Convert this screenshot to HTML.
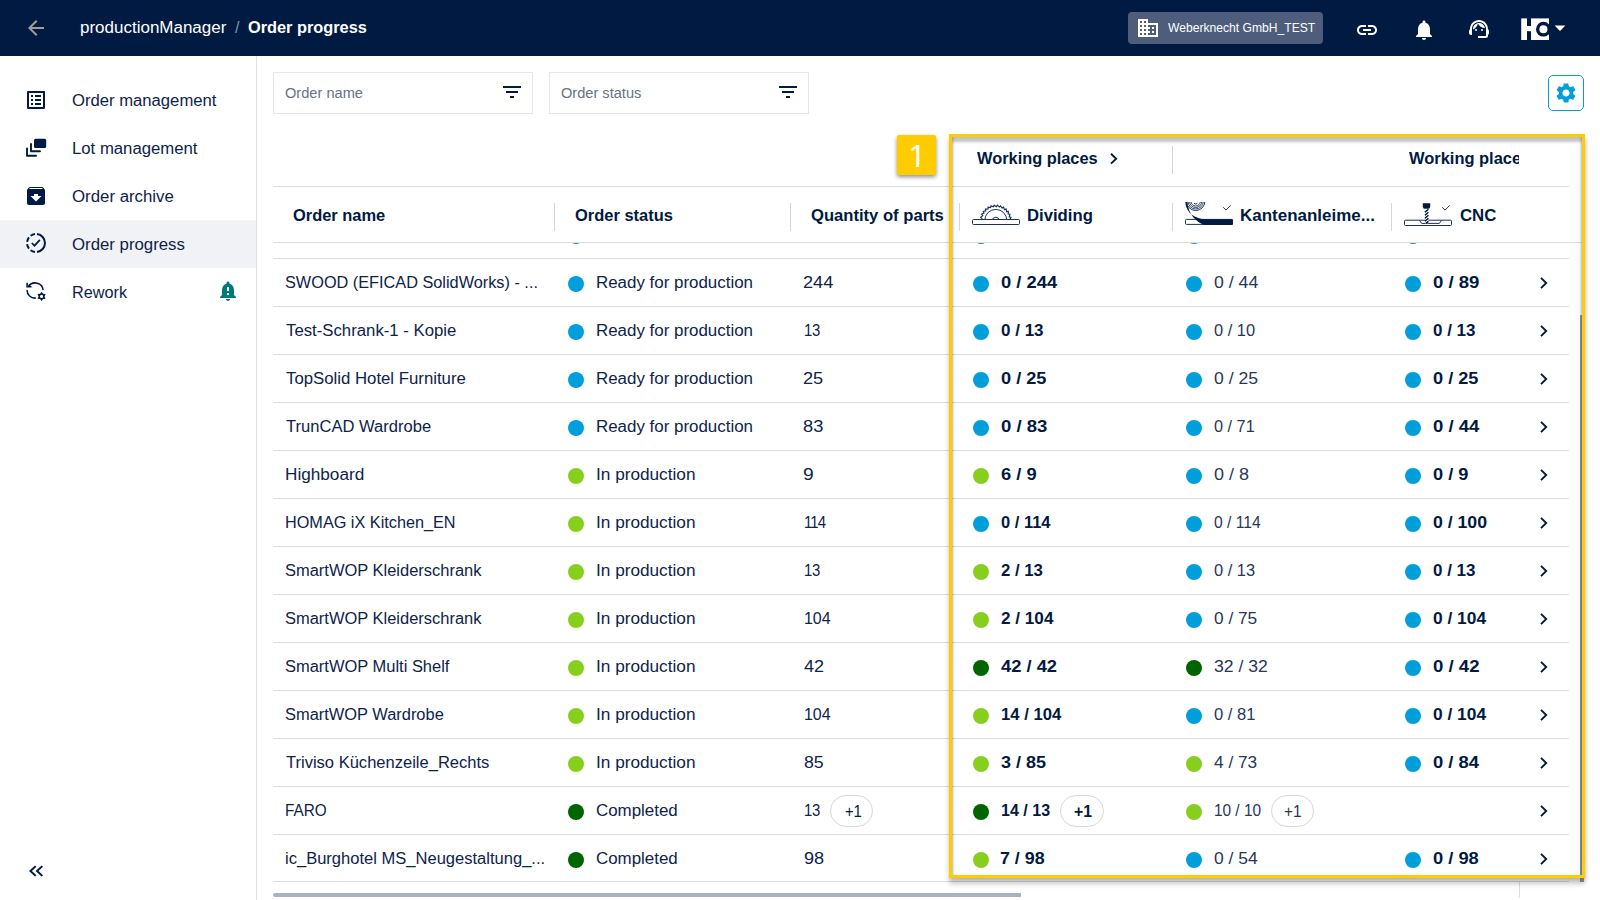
<!DOCTYPE html>
<html lang="en">
<head>
<meta charset="utf-8">
<title>productionManager - Order progress</title>
<style>
*{box-sizing:border-box;margin:0;padding:0}
html,body{width:1600px;height:900px;overflow:hidden;background:#fff}
body{font-family:"Liberation Sans",sans-serif;color:#001a41;position:relative;font-size:16px}
.abs{position:absolute}
.t{position:absolute;white-space:nowrap;line-height:20px;font-size:16px;color:#001a41;transform-origin:0 0}
.b{font-weight:700}
#top{position:absolute;left:0;top:0;width:1600px;height:56px;background:#001a41}
#org{position:absolute;left:1128px;top:12px;width:195px;height:32px;border-radius:4px;background:#4d5d7b}
#side{position:absolute;left:0;top:56px;width:257px;height:844px;border-right:1px solid #dddfe4;background:#fff}
#sel{position:absolute;left:0;top:220px;width:256px;height:48px;background:#f1f2f5}
.filt{position:absolute;top:72px;width:260px;height:42px;border:1px solid #e4e6ec;background:#fff}
#gear{position:absolute;left:1548px;top:75px;width:36px;height:36px;border:1px solid #009fdc;border-radius:5px;background:#fff}
.hl{position:absolute;height:1px;background:#dcdde1}
.vl{position:absolute;width:1px;background:#d4d6db}
.dot{position:absolute;width:16px;height:16px;border-radius:50%}
.blue{background:#009fdc}.lg{background:#86cf1e}.dg{background:#006400}
.chip{position:absolute;height:32px;border:1px solid #d7d8dc;border-radius:16px;background:#fff}
#ybox{position:absolute;left:949px;top:134px;width:636px;height:744px;border:3px solid #ffcc00;box-shadow:0 6px 5px rgba(0,0,0,.2),1px 2px 4px rgba(0,0,0,.12),inset 0 5px 3px rgba(0,0,0,.23),inset 3px 0 3px -2px rgba(0,0,0,.22),inset -3px 0 3px -2px rgba(0,0,0,.22)}
#badge{position:absolute;left:897px;top:135px;width:39px;height:40px;background:#ffcc00;border-radius:2px;box-shadow:0 2px 4px rgba(0,0,0,.45)}
</style>
</head>
<body>
<div id="top"></div>
<svg class="abs" style="left:24px;top:16px" width="24" height="24" viewBox="0 0 24 24"><path fill="#9e9e99" d="M20 11H7.83l5.59-5.59L12 4l-8 8 8 8 1.41-1.41L7.83 13H20v-2z"/></svg>
<div id="org"></div>
<svg class="abs" style="left:1136px;top:15.5px" width="24" height="24" viewBox="0 0 24 24"><path fill="#fff" d="M12 7V3H2v18h20V7H12zM6 19H4v-2h2v2zm0-4H4v-2h2v2zm0-4H4V9h2v2zm0-4H4V5h2v2zm4 12H8v-2h2v2zm0-4H8v-2h2v2zm0-4H8V9h2v2zm0-4H8V5h2v2zm10 12h-8v-2h2v-2h-2v-2h2v-2h-2V9h8v10zm-2-8h-2v2h2v-2zm0 4h-2v2h2v-2z"/></svg>
<svg class="abs" style="left:1355px;top:17.5px" width="24" height="24" viewBox="0 0 24 24"><path fill="#fff" d="M3.9 12c0-1.71 1.39-3.1 3.1-3.1h4V7H7c-2.76 0-5 2.24-5 5s2.24 5 5 5h4v-1.900H7c-1.71 0-3.1-1.390-3.1-3.100zM8 13h8v-2H8v2zm9-6h-4v1.900h4c1.710 0 3.100 1.390 3.100 3.100s-1.390 3.100-3.100 3.100h-4V17h4c2.760 0 5-2.240 5-5s-2.240-5-5-5z"/></svg>
<svg class="abs" style="left:1411.5px;top:17.5px" width="24" height="24" viewBox="0 0 24 24"><path fill="#fff" d="M12 22c1.100 0 2-.900 2-2h-4c0 1.100.890 2 2 2zm6-6v-5c0-3.070-1.640-5.640-4.500-6.320V4c0-.830-.670-1.500-1.500-1.500s-1.500.670-1.500 1.500v.680C7.630 5.360 6 7.920 6 11v5l-2 2v1h16v-1l-2-2z"/></svg>
<svg class="abs" style="left:1467.3px;top:17px" width="24" height="24" viewBox="0 0 24 24"><path fill="#fff" d="M21 12.220C21 6.730 16.740 3 12 3c-4.690 0-9 3.650-9 9.280-.600.340-1 .980-1 1.720v2c0 1.100.900 2 2 2h1v-6.100c0-3.870 3.130-7 7-7s7 3.130 7 7V19h-8v2h8c1.100 0 2-.900 2-2v-1.220c.590-.310 1-.920 1-1.640v-2.300c0-.700-.410-1.310-1-1.620z"/><circle cx="9" cy="13" r="1" fill="#fff"/><circle cx="15" cy="13" r="1" fill="#fff"/><path fill="#fff" d="M18 11.030C17.520 8.180 15.040 6 12.050 6c-3.030 0-6.290 2.510-6.030 6.450 2.470-1.010 4.330-3.210 4.860-5.890 1.310 2.630 4 4.440 7.120 4.470z"/></svg>
<svg class="abs" style="left:1521px;top:18px" width="29" height="23" viewBox="1521 18 29 23"><defs><clipPath id="lg"><rect x="1531" y="18.4" width="18" height="21.6"/></clipPath></defs><rect x="1521.2" y="18.4" width="5.8" height="21.6" fill="#fff"/><rect x="1526" y="26" width="6" height="5.2" fill="#fff"/><rect x="1531" y="18.4" width="18" height="21.6" fill="#fff"/><g clip-path="url(#lg)"><circle cx="1543.4" cy="29.2" r="7.4" fill="#001a41"/><circle cx="1543.4" cy="29.2" r="4" fill="#fff"/></g></svg>
<svg class="abs" style="left:1554px;top:25px" width="12" height="7" viewBox="0 0 12 7"><path fill="#fff" d="M0.600 0.400h10.800L6 6z"/></svg>
<div id="side"></div><div id="sel"></div>
<svg class="abs" style="left:24px;top:88px" width="24" height="24" viewBox="0 0 24 24"><path fill="#001a41" d="M19 5v14H5V5h14m1.100-2H3.900c-.500 0-.900.400-.900.900v16.200c0 .400.400.900.900.900h16.200c.400 0 .900-.500.900-.900V3.900c0-.500-.500-.900-.900-.900zM11 7h6v2h-6V7zm0 4h6v2h-6v-2zm0 4h6v2h-6zM7 7h2v2H7zm0 4h2v2H7zm0 4h2v2H7z"/></svg>
<svg class="abs" style="left:24px;top:136px" width="24" height="24" viewBox="0 0 24 24"><rect x="10" y="2.800" width="12.200" height="9.300" rx="1.600" fill="#001a41"/><path d="M7 8v7.200h9M3 12.500v7.200h9" fill="none" stroke="#001a41" stroke-width="1.900" stroke-linecap="round" stroke-linejoin="round"/></svg>
<svg class="abs" style="left:24px;top:184px" width="24" height="24" viewBox="0 0 24 24"><path fill="#001a41" d="M20.540 5.230l-1.390-1.680C18.880 3.210 18.470 3 18 3H6c-.470 0-.880.210-1.160.550L3.460 5.230C3.170 5.570 3 6.020 3 6.500V19c0 1.100.900 2 2 2h14c1.100 0 2-.900 2-2V6.500c0-.480-.170-.930-.460-1.270zM12 17.500L6.500 12H10v-2h4v2h3.500L12 17.500zM5.120 5l.810-1h12l.940 1H5.120z"/></svg>
<svg class="abs" style="left:24px;top:231px" width="24" height="24" viewBox="0 0 24 24"><g fill="none" stroke="#001a41" stroke-width="2"><path d="M13 3.060A9 9 0 0 1 13 20.940"/><path d="M11 3.060A9 9 0 0 0 6.600 4.800M5 6.300A9 9 0 0 0 3.100 10.800M3.100 13.200A9 9 0 0 0 5 17.700M6.600 19.200A9 9 0 0 0 11 20.940"/></g><path d="M7.800 12l2.700 2.700 5.400-5.800" fill="none" stroke="#001a41" stroke-width="1.700"/></svg>
<svg class="abs" style="left:24px;top:280px" width="24" height="24" viewBox="0 0 24 24"><g fill="none" stroke="#001a41" stroke-width="1.550"><path d="M19.100 10.100A8 7.600 0 0 0 4.500 6.300"/><path d="M3.100 2.700v4.050h4.400" stroke-linejoin="miter"/><path d="M3.100 10.400A8 7.700 0 0 0 11.400 18.100" stroke-linecap="round"/></g><path fill="#001a41" fill-rule="evenodd" d="M17.55 11.70L19.03 13.85L21.62 14.05L20.50 16.40L21.62 18.75L19.03 18.95L17.55 21.10L16.08 18.95L13.48 18.75L14.60 16.40L13.48 14.05L16.07 13.85zM17.55 14.85a1.550 1.550 0 1 0 0 3.100a1.550 1.550 0 0 0 0-3.100z"/></svg>
<svg class="abs" style="left:216.200px;top:279.200px" width="24" height="24" viewBox="0 0 24 24"><path fill="#00797a" d="M18 16v-5c0-3.070-1.640-5.640-4.500-6.320V4c0-.830-.670-1.500-1.500-1.500s-1.500.670-1.500 1.500v.680C7.630 5.360 6 7.920 6 11v5l-2 2v1h16v-1l-2-2zm-5 0h-2v-2h2v2zm0-4h-2V8h2v4zm-1 10c1.100 0 2-.900 2-2h-4c0 1.100.890 2 2 2z"/></svg>
<svg class="abs" style="left:24px;top:859.400px" width="24" height="24" viewBox="0 0 24 24"><path fill="#001a41" d="M17.590 17.600L19 16.250 14.500 12.050 19 7.850 17.590 6.500l-6 5.550z M11 17.600l1.410-1.350L7.900 12.050l4.510-4.200L11 6.500l-6 5.550z"/></svg>
<div class="filt" style="left:273px"></div><svg class="abs" style="left:500px;top:80px" width="24" height="24" viewBox="0 0 24 24"><path fill="#001a41" d="M10 18h4v-2h-4v2zM3 6v2h18V6H3zm3 7h12v-2H6v2z"/></svg>
<div class="filt" style="left:549px"></div><svg class="abs" style="left:776px;top:80px" width="24" height="24" viewBox="0 0 24 24"><path fill="#001a41" d="M10 18h4v-2h-4v2zM3 6v2h18V6H3zm3 7h12v-2H6v2z"/></svg>
<div id="gear"></div><svg class="abs" style="left:1554px;top:81px" width="24" height="24" viewBox="0 0 24 24"><path fill="#009fdc" d="M19.140 12.940c.040-.300.060-.610.060-.940 0-.320-.020-.640-.070-.940l2.030-1.580c.180-.140.230-.410.120-.610l-1.920-3.320c-.120-.220-.370-.290-.590-.220l-2.390.960c-.500-.380-1.030-.700-1.620-.940l-.360-2.540c-.040-.240-.240-.410-.480-.410h-3.840c-.240 0-.430.170-.470.410l-.360 2.540c-.590.240-1.130.570-1.620.940l-2.390-.960c-.220-.080-.470 0-.590.220L2.740 8.870c-.120.210-.080.470.120.610l2.030 1.580c-.050.300-.090.630-.090.940s.020.640.070.940l-2.030 1.580c-.180.140-.230.410-.120.610l1.920 3.320c.120.220.370.290.590.220l2.390-.960c.500.380 1.030.700 1.620.940l.360 2.540c.050.240.240.410.480.410h3.840c.240 0 .440-.170.470-.410l.360-2.540c.590-.240 1.130-.560 1.620-.940l2.390.960c.220.080.470 0 .590-.220l1.920-3.320c.120-.220.070-.470-.120-.610l-2.010-1.580zM12 15.600c-1.980 0-3.600-1.620-3.600-3.600s1.620-3.600 3.600-3.600 3.600 1.620 3.600 3.600-1.620 3.600-3.600 3.600z"/></svg>
<div class="hl" style="left:273px;top:186px;width:1296px"></div>
<div class="hl" style="left:273px;top:242px;width:1309px"></div>
<div class="hl" style="left:273px;top:258px;width:1296px"></div>
<div class="hl" style="left:273px;top:306px;width:1296px"></div>
<div class="hl" style="left:273px;top:354px;width:1296px"></div>
<div class="hl" style="left:273px;top:402px;width:1296px"></div>
<div class="hl" style="left:273px;top:450px;width:1296px"></div>
<div class="hl" style="left:273px;top:498px;width:1296px"></div>
<div class="hl" style="left:273px;top:546px;width:1296px"></div>
<div class="hl" style="left:273px;top:594px;width:1296px"></div>
<div class="hl" style="left:273px;top:642px;width:1296px"></div>
<div class="hl" style="left:273px;top:690px;width:1296px"></div>
<div class="hl" style="left:273px;top:738px;width:1296px"></div>
<div class="hl" style="left:273px;top:786px;width:1296px"></div>
<div class="hl" style="left:273px;top:834px;width:1296px"></div>
<div class="hl" style="left:273px;top:881px;width:1296px"></div>
<div class="vl" style="left:554px;top:203px;height:28px"></div>
<div class="vl" style="left:790px;top:203px;height:28px"></div>
<div class="vl" style="left:959px;top:203px;height:28px"></div>
<div class="vl" style="left:1172px;top:203px;height:28px"></div>
<div class="vl" style="left:1391px;top:203px;height:28px"></div>
<div class="vl" style="left:1172px;top:146px;height:28px"></div>
<div class="vl" style="left:1519px;top:882px;height:16px;background:#dcdde1"></div>
<div class="abs" style="left:568px;top:243px;width:16px;height:2px;overflow:hidden"><i class="dot blue" style="left:0;top:-15px"></i></div>
<div class="abs" style="left:973px;top:243px;width:16px;height:2px;overflow:hidden"><i class="dot blue" style="left:0;top:-15px"></i></div>
<div class="abs" style="left:1186px;top:243px;width:16px;height:2px;overflow:hidden"><i class="dot blue" style="left:0;top:-15px"></i></div>
<div class="abs" style="left:1405px;top:243px;width:16px;height:2px;overflow:hidden"><i class="dot blue" style="left:0;top:-15px"></i></div>
<div class="abs" style="left:273px;top:893px;width:748px;height:4px;border-radius:2px 0 0 2px;background:#a9b1c2"></div>
<div class="abs" style="left:1580px;top:315px;width:4px;height:567px;background:#8f98ab"></div>
<svg class="abs" style="left:1108px;top:151px" width="12" height="16" viewBox="0 0 12 16"><path d="M3 2.800L8.200 7.700 3 12.600" fill="none" stroke="#001a41" stroke-width="1.900"/></svg>
<svg class="abs" style="left:970px;top:200px" width="52" height="28" viewBox="970 200 52 28"><defs><clipPath id="sc"><rect x="970" y="200" width="52" height="19.500"/></clipPath></defs><g fill="none" stroke="#1c3054" stroke-width="1"><rect x="972.500" y="219.500" width="47" height="5" rx="1"/><g clip-path="url(#sc)"><path d="M980.30 220.60 L981.95 218.55 L980.64 217.38 L982.68 215.72 L981.64 214.30 L983.98 213.10 L983.26 211.49 L985.80 210.80 L985.43 209.08 L988.05 208.94 L988.05 207.18 L990.65 207.58 L991.01 205.86 L993.47 206.80 L994.18 205.18 L996.39 206.61 L997.42 205.18 L999.28 207.04 L1000.59 205.86 L1002.02 208.06 L1003.55 207.18 L1004.50 209.63 L1006.17 209.08 L1006.59 211.68 L1008.34 211.49 L1008.21 214.11 L1009.96 214.30 L1009.28 216.84 L1010.96 217.38 L1009.77 219.72 L1011.30 220.60" stroke-width="1.150"/><circle cx="995.8" cy="220.40" r="11"/><circle cx="995.8" cy="220.40" r="3.200"/></g></g></svg>
<svg class="abs" style="left:1183px;top:200px" width="52" height="28" viewBox="1183 200 52 28"><defs><clipPath id="kc"><rect x="1183" y="202" width="30" height="12"/></clipPath></defs><rect x="1185.500" y="219.400" width="47" height="5" rx="1" fill="#fff" stroke="#1c3054" stroke-width="1"/><path d="M1185.300 202 C1186 213 1195 219 1206 219.300 L1231.800 219.300 Q1233 219.300 1233 220.500 L1233 223.700 Q1233 224.900 1231.800 224.900 L1204 224.900 C1196 221.500 1188.500 215 1187.300 202 Z" fill="#001a41"/><g clip-path="url(#kc)" fill="none" stroke="#1c3054"><circle cx="1195.700" cy="201.300" r="9.2" stroke-width="1"/><circle cx="1195.700" cy="201.300" r="7.7" stroke-width="0.9"/><circle cx="1195.700" cy="201.300" r="6.2" stroke-width="0.9"/><circle cx="1195.700" cy="201.300" r="4.7" stroke-width="0.9"/><path d="M1194 203.300q1.700 1.500 3.400 0" stroke-width="1"/></g><path d="M1223.2 207.3l2.800 2.800 4.800-4.800" fill="none" stroke="#1c3054" stroke-width="1"/></svg>
<svg class="abs" style="left:1402px;top:200px" width="52" height="28" viewBox="1402 200 52 28"><rect x="1404.500" y="220.200" width="47" height="5.300" rx="1" fill="#fff" stroke="#1c3054" stroke-width="1"/><path d="M1419.400 220.300l2.300 3.100h17.600l2.300-3.100" fill="none" stroke="#1c3054" stroke-width="1"/><path d="M1422.800 203.200h7.400v3.300q0 2.300-2 2.300h-3.400q-2 0-2-2.300z" fill="#001a41"/><rect x="1425.100" y="209" width="3.300" height="14.300" fill="#fff"/><g stroke="#001a41" stroke-width="1.500" fill="none"><path d="M1424.900 212.300l3.500-3M1424.900 215.300l3.500-3M1424.900 218.300l3.500-3M1424.900 221.300l3.500-3M1426 223.300l2.400-2"/></g><path d="M1442.2 207.3l2.800 2.800 4.800-4.800" fill="none" stroke="#1c3054" stroke-width="1"/></svg>
<i class="dot blue" style="left:568px;top:275.5px"></i>
<i class="dot blue" style="left:973px;top:275.5px"></i>
<i class="dot blue" style="left:1186px;top:275.5px"></i>
<i class="dot blue" style="left:1405px;top:275.5px"></i>
<svg class="abs" style="left:1538px;top:275px" width="12" height="16" viewBox="0 0 12 16"><path d="M3 2.800L8.200 8 3 13.200" fill="none" stroke="#001a41" stroke-width="1.900"/></svg>
<i class="dot blue" style="left:568px;top:323.5px"></i>
<i class="dot blue" style="left:973px;top:323.5px"></i>
<i class="dot blue" style="left:1186px;top:323.5px"></i>
<i class="dot blue" style="left:1405px;top:323.5px"></i>
<svg class="abs" style="left:1538px;top:323px" width="12" height="16" viewBox="0 0 12 16"><path d="M3 2.800L8.200 8 3 13.200" fill="none" stroke="#001a41" stroke-width="1.900"/></svg>
<i class="dot blue" style="left:568px;top:371.5px"></i>
<i class="dot blue" style="left:973px;top:371.5px"></i>
<i class="dot blue" style="left:1186px;top:371.5px"></i>
<i class="dot blue" style="left:1405px;top:371.5px"></i>
<svg class="abs" style="left:1538px;top:371px" width="12" height="16" viewBox="0 0 12 16"><path d="M3 2.800L8.200 8 3 13.200" fill="none" stroke="#001a41" stroke-width="1.900"/></svg>
<i class="dot blue" style="left:568px;top:419.5px"></i>
<i class="dot blue" style="left:973px;top:419.5px"></i>
<i class="dot blue" style="left:1186px;top:419.5px"></i>
<i class="dot blue" style="left:1405px;top:419.5px"></i>
<svg class="abs" style="left:1538px;top:419px" width="12" height="16" viewBox="0 0 12 16"><path d="M3 2.800L8.200 8 3 13.200" fill="none" stroke="#001a41" stroke-width="1.900"/></svg>
<i class="dot lg" style="left:568px;top:467.5px"></i>
<i class="dot lg" style="left:973px;top:467.5px"></i>
<i class="dot blue" style="left:1186px;top:467.5px"></i>
<i class="dot blue" style="left:1405px;top:467.5px"></i>
<svg class="abs" style="left:1538px;top:467px" width="12" height="16" viewBox="0 0 12 16"><path d="M3 2.800L8.200 8 3 13.200" fill="none" stroke="#001a41" stroke-width="1.900"/></svg>
<i class="dot lg" style="left:568px;top:515.5px"></i>
<i class="dot blue" style="left:973px;top:515.5px"></i>
<i class="dot blue" style="left:1186px;top:515.5px"></i>
<i class="dot blue" style="left:1405px;top:515.5px"></i>
<svg class="abs" style="left:1538px;top:515px" width="12" height="16" viewBox="0 0 12 16"><path d="M3 2.800L8.200 8 3 13.200" fill="none" stroke="#001a41" stroke-width="1.900"/></svg>
<i class="dot lg" style="left:568px;top:563.5px"></i>
<i class="dot lg" style="left:973px;top:563.5px"></i>
<i class="dot blue" style="left:1186px;top:563.5px"></i>
<i class="dot blue" style="left:1405px;top:563.5px"></i>
<svg class="abs" style="left:1538px;top:563px" width="12" height="16" viewBox="0 0 12 16"><path d="M3 2.800L8.200 8 3 13.200" fill="none" stroke="#001a41" stroke-width="1.900"/></svg>
<i class="dot lg" style="left:568px;top:611.5px"></i>
<i class="dot lg" style="left:973px;top:611.5px"></i>
<i class="dot blue" style="left:1186px;top:611.5px"></i>
<i class="dot blue" style="left:1405px;top:611.5px"></i>
<svg class="abs" style="left:1538px;top:611px" width="12" height="16" viewBox="0 0 12 16"><path d="M3 2.800L8.200 8 3 13.200" fill="none" stroke="#001a41" stroke-width="1.900"/></svg>
<i class="dot lg" style="left:568px;top:659.5px"></i>
<i class="dot dg" style="left:973px;top:659.5px"></i>
<i class="dot dg" style="left:1186px;top:659.5px"></i>
<i class="dot blue" style="left:1405px;top:659.5px"></i>
<svg class="abs" style="left:1538px;top:659px" width="12" height="16" viewBox="0 0 12 16"><path d="M3 2.800L8.200 8 3 13.200" fill="none" stroke="#001a41" stroke-width="1.900"/></svg>
<i class="dot lg" style="left:568px;top:707.5px"></i>
<i class="dot lg" style="left:973px;top:707.5px"></i>
<i class="dot blue" style="left:1186px;top:707.5px"></i>
<i class="dot blue" style="left:1405px;top:707.5px"></i>
<svg class="abs" style="left:1538px;top:707px" width="12" height="16" viewBox="0 0 12 16"><path d="M3 2.800L8.200 8 3 13.200" fill="none" stroke="#001a41" stroke-width="1.900"/></svg>
<i class="dot lg" style="left:568px;top:755.5px"></i>
<i class="dot lg" style="left:973px;top:755.5px"></i>
<i class="dot lg" style="left:1186px;top:755.5px"></i>
<i class="dot blue" style="left:1405px;top:755.5px"></i>
<svg class="abs" style="left:1538px;top:755px" width="12" height="16" viewBox="0 0 12 16"><path d="M3 2.800L8.200 8 3 13.200" fill="none" stroke="#001a41" stroke-width="1.900"/></svg>
<i class="dot dg" style="left:568px;top:803.5px"></i>
<i class="dot dg" style="left:973px;top:803.5px"></i>
<i class="dot lg" style="left:1186px;top:803.5px"></i>
<svg class="abs" style="left:1538px;top:803px" width="12" height="16" viewBox="0 0 12 16"><path d="M3 2.800L8.200 8 3 13.200" fill="none" stroke="#001a41" stroke-width="1.900"/></svg>
<i class="dot dg" style="left:568px;top:851.5px"></i>
<i class="dot lg" style="left:973px;top:851.5px"></i>
<i class="dot blue" style="left:1186px;top:851.5px"></i>
<i class="dot blue" style="left:1405px;top:851.5px"></i>
<svg class="abs" style="left:1538px;top:851px" width="12" height="16" viewBox="0 0 12 16"><path d="M3 2.800L8.200 8 3 13.200" fill="none" stroke="#001a41" stroke-width="1.900"/></svg>
<div class="chip" style="left:830px;top:795px;width:42.500px"></div>
<div class="chip" style="left:1060.250px;top:795px;width:43.500px"></div>
<div class="chip" style="left:1271px;top:795px;width:42.500px"></div>
<div id="ybox"></div><div id="badge"></div>
<span class="t" style="left:79.91px;top:17.71px;color:#fff;transform:scaleX(1.0617)">productionManager</span>
<span class="t" style="left:235.00px;top:17.71px;color:#8d95a6">/</span>
<span class="t b" style="left:248.08px;top:17.71px;color:#fff;transform:scaleX(1.0202)">Order progress</span>
<span class="t" style="left:1168.05px;top:18.10px;font-size:13px;color:#fff;transform:scaleX(0.9320)">Weberknecht GmbH_TEST</span>
<span class="t" style="left:71.71px;top:91.46px;color:#0e2349;transform:scaleX(1.0409)">Order management</span>
<span class="t" style="left:71.63px;top:139.46px;color:#0e2349;transform:scaleX(1.0451)">Lot management</span>
<span class="t" style="left:71.70px;top:187.46px;color:#0e2349;transform:scaleX(1.0508)">Order archive</span>
<span class="t" style="left:71.70px;top:235.46px;color:#0e2349;transform:scaleX(1.0493)">Order progress</span>
<span class="t" style="left:71.67px;top:283.46px;color:#0e2349;transform:scaleX(1.0143)">Rework</span>
<span class="t" style="left:285.11px;top:83.15px;font-size:14px;color:#68728a;transform:scaleX(1.0434)">Order name</span>
<span class="t" style="left:561.11px;top:83.15px;font-size:14px;color:#68728a;transform:scaleX(1.0427)">Order status</span>
<span class="t b" style="left:976.78px;top:149.46px;transform:scaleX(1.0231)">Working places</span>
<div class="abs" style="left:1408.58px;top:149.46px;width:110.72px;height:20px;overflow:hidden"><span class="t b" style="left:0;top:0;transform:scaleX(1.0282)">Working places</span></div>
<span class="t b" style="left:292.58px;top:205.71px;transform:scaleX(1.0270)">Order name</span>
<span class="t b" style="left:574.83px;top:205.71px;transform:scaleX(1.0285)">Order status</span>
<span class="t b" style="left:810.57px;top:205.71px;transform:scaleX(1.0379)">Quantity of parts</span>
<span class="t b" style="left:1027.28px;top:205.71px;transform:scaleX(1.0432)">Dividing</span>
<span class="t b" style="left:1240.26px;top:205.71px;transform:scaleX(1.0610)">Kantenanleime...</span>
<span class="t b" style="left:1459.61px;top:205.71px;transform:scaleX(1.0485)">CNC</span>
<span class="t" style="left:285.26px;top:272.96px;color:#0e2349;transform:scaleX(1.0174)">SWOOD (EFICAD SolidWorks) - ...</span>
<span class="t" style="left:595.91px;top:272.96px;color:#0e2349;transform:scaleX(1.0569)">Ready for production</span>
<span class="t" style="left:803.29px;top:272.96px;color:#0e2349;transform:scaleX(1.1329)">244</span>
<span class="t b" style="left:1000.52px;top:272.96px;transform:scaleX(1.1460)">0 / 244</span>
<span class="t" style="left:1213.81px;top:272.96px;color:#27365a;transform:scaleX(1.1043)">0 / 44</span>
<span class="t b" style="left:1432.57px;top:272.96px;transform:scaleX(1.1597)">0 / 89</span>
<span class="t" style="left:285.62px;top:320.96px;color:#0e2349;transform:scaleX(1.0472)">Test-Schrank-1 - Kopie</span>
<span class="t" style="left:595.91px;top:320.96px;color:#0e2349;transform:scaleX(1.0569)">Ready for production</span>
<span class="t" style="left:803.87px;top:320.96px;color:#0e2349;transform:scaleX(0.9300);letter-spacing:-0.284px">13</span>
<span class="t b" style="left:1000.58px;top:320.96px;transform:scaleX(1.0626)">0 / 13</span>
<span class="t" style="left:1213.86px;top:320.96px;color:#27365a;transform:scaleX(1.0250)">0 / 10</span>
<span class="t b" style="left:1432.63px;top:320.96px;transform:scaleX(1.0587)">0 / 13</span>
<span class="t" style="left:285.62px;top:368.96px;color:#0e2349;transform:scaleX(1.0477)">TopSolid Hotel Furniture</span>
<span class="t" style="left:595.91px;top:368.96px;color:#0e2349;transform:scaleX(1.0569)">Ready for production</span>
<span class="t" style="left:803.29px;top:368.96px;color:#0e2349;transform:scaleX(1.1336)">25</span>
<span class="t b" style="left:1000.53px;top:368.96px;transform:scaleX(1.1360)">0 / 25</span>
<span class="t" style="left:1213.81px;top:368.96px;color:#27365a;transform:scaleX(1.0972)">0 / 25</span>
<span class="t b" style="left:1432.58px;top:368.96px;transform:scaleX(1.1347)">0 / 25</span>
<span class="t" style="left:285.63px;top:416.96px;color:#0e2349;transform:scaleX(1.0351)">TrunCAD Wardrobe</span>
<span class="t" style="left:595.91px;top:416.96px;color:#0e2349;transform:scaleX(1.0569)">Ready for production</span>
<span class="t" style="left:803.45px;top:416.96px;color:#0e2349;transform:scaleX(1.1434)">83</span>
<span class="t b" style="left:1000.52px;top:416.96px;transform:scaleX(1.1592)">0 / 83</span>
<span class="t" style="left:1213.86px;top:416.96px;color:#27365a;transform:scaleX(1.0162)">0 / 71</span>
<span class="t b" style="left:1432.57px;top:416.96px;transform:scaleX(1.1574)">0 / 44</span>
<span class="t" style="left:285.19px;top:464.96px;color:#0e2349;transform:scaleX(1.0730)">Highboard</span>
<span class="t" style="left:595.71px;top:464.96px;color:#0e2349;transform:scaleX(1.0751)">In production</span>
<span class="t" style="left:803.35px;top:464.96px;color:#0e2349;transform:scaleX(1.2000)">9</span>
<span class="t b" style="left:1000.58px;top:464.96px;transform:scaleX(1.1435)">6 / 9</span>
<span class="t" style="left:1213.80px;top:464.96px;color:#27365a;transform:scaleX(1.1237)">0 / 8</span>
<span class="t b" style="left:1432.58px;top:464.96px;transform:scaleX(1.1369)">0 / 9</span>
<span class="t" style="left:285.27px;top:512.96px;color:#0e2349;transform:scaleX(1.0149)">HOMAG iX Kitchen_EN</span>
<span class="t" style="left:595.71px;top:512.96px;color:#0e2349;transform:scaleX(1.0751)">In production</span>
<span class="t" style="left:803.87px;top:512.96px;color:#0e2349;transform:scaleX(0.9300);letter-spacing:-0.889px">114</span>
<span class="t b" style="left:1000.60px;top:512.96px;transform:scaleX(1.0300)">0 / 114</span>
<span class="t" style="left:1213.89px;top:512.96px;color:#27365a;transform:scaleX(0.9754)">0 / 114</span>
<span class="t b" style="left:1432.60px;top:512.96px;transform:scaleX(1.1041)">0 / 100</span>
<span class="t" style="left:285.25px;top:560.96px;color:#0e2349;transform:scaleX(1.0291)">SmartWOP Kleiderschrank</span>
<span class="t" style="left:595.71px;top:560.96px;color:#0e2349;transform:scaleX(1.0751)">In production</span>
<span class="t" style="left:803.87px;top:560.96px;color:#0e2349;transform:scaleX(0.9300);letter-spacing:-0.284px">13</span>
<span class="t b" style="left:1000.67px;top:560.96px;transform:scaleX(1.0476)">2 / 13</span>
<span class="t" style="left:1213.86px;top:560.96px;color:#27365a;transform:scaleX(1.0270)">0 / 13</span>
<span class="t b" style="left:1432.63px;top:560.96px;transform:scaleX(1.0587)">0 / 13</span>
<span class="t" style="left:285.25px;top:608.96px;color:#0e2349;transform:scaleX(1.0291)">SmartWOP Kleiderschrank</span>
<span class="t" style="left:595.71px;top:608.96px;color:#0e2349;transform:scaleX(1.0751)">In production</span>
<span class="t" style="left:803.79px;top:608.96px;color:#0e2349;transform:scaleX(0.9957)">104</span>
<span class="t b" style="left:1000.66px;top:608.96px;transform:scaleX(1.0717)">2 / 104</span>
<span class="t" style="left:1213.83px;top:608.96px;color:#27365a;transform:scaleX(1.0779)">0 / 75</span>
<span class="t b" style="left:1432.61px;top:608.96px;transform:scaleX(1.0848)">0 / 104</span>
<span class="t" style="left:285.25px;top:656.96px;color:#0e2349;transform:scaleX(1.0293)">SmartWOP Multi Shelf</span>
<span class="t" style="left:595.71px;top:656.96px;color:#0e2349;transform:scaleX(1.0751)">In production</span>
<span class="t" style="left:804.09px;top:656.96px;color:#0e2349;transform:scaleX(1.1248)">42</span>
<span class="t b" style="left:1000.97px;top:656.96px;transform:scaleX(1.1447)">42 / 42</span>
<span class="t" style="left:1213.83px;top:656.96px;color:#27365a;transform:scaleX(1.0996)">32 / 32</span>
<span class="t b" style="left:1432.57px;top:656.96px;transform:scaleX(1.1611)">0 / 42</span>
<span class="t" style="left:285.25px;top:704.96px;color:#0e2349;transform:scaleX(1.0263)">SmartWOP Wardrobe</span>
<span class="t" style="left:595.71px;top:704.96px;color:#0e2349;transform:scaleX(1.0751)">In production</span>
<span class="t" style="left:803.79px;top:704.96px;color:#0e2349;transform:scaleX(0.9957)">104</span>
<span class="t b" style="left:1000.70px;top:704.96px;transform:scaleX(1.0399)">14 / 104</span>
<span class="t" style="left:1213.85px;top:704.96px;color:#27365a;transform:scaleX(1.0356)">0 / 81</span>
<span class="t b" style="left:1432.61px;top:704.96px;transform:scaleX(1.0848)">0 / 104</span>
<span class="t" style="left:285.63px;top:752.96px;color:#0e2349;transform:scaleX(1.0332)">Triviso Küchenzeile_Rechts</span>
<span class="t" style="left:595.71px;top:752.96px;color:#0e2349;transform:scaleX(1.0751)">In production</span>
<span class="t" style="left:803.73px;top:752.96px;color:#0e2349;transform:scaleX(1.1078)">85</span>
<span class="t b" style="left:1000.84px;top:752.96px;transform:scaleX(1.1219)">3 / 85</span>
<span class="t" style="left:1214.10px;top:752.96px;color:#27365a;transform:scaleX(1.0780)">4 / 73</span>
<span class="t b" style="left:1432.57px;top:752.96px;transform:scaleX(1.1498)">0 / 84</span>
<span class="t" style="left:285.34px;top:800.96px;color:#0e2349;transform:scaleX(0.9570)">FARO</span>
<span class="t" style="left:596.44px;top:800.96px;color:#0e2349;transform:scaleX(1.0565)">Completed</span>
<span class="t" style="left:803.87px;top:800.96px;color:#0e2349;transform:scaleX(0.9300);letter-spacing:-0.284px">13</span>
<span class="t b" style="left:1000.74px;top:800.96px;transform:scaleX(1.0033)">14 / 13</span>
<span class="t" style="left:1213.83px;top:800.96px;color:#27365a;transform:scaleX(0.9610)">10 / 10</span>
<span class="t" style="left:285.49px;top:848.96px;color:#0e2349;transform:scaleX(1.0334)">ic_Burghotel MS_Neugestaltung_...</span>
<span class="t" style="left:596.44px;top:848.96px;color:#0e2349;transform:scaleX(1.0565)">Completed</span>
<span class="t" style="left:803.65px;top:848.96px;color:#0e2349;transform:scaleX(1.1314)">98</span>
<span class="t b" style="left:1000.48px;top:848.96px;transform:scaleX(1.1132)">7 / 98</span>
<span class="t" style="left:1213.82px;top:848.96px;color:#27365a;transform:scaleX(1.0915)">0 / 54</span>
<span class="t b" style="left:1432.58px;top:848.96px;transform:scaleX(1.1438)">0 / 98</span>
<span class="t" style="left:844.57px;top:801.96px;transform:scaleX(0.9300);letter-spacing:-0.228px">+1</span>
<span class="t b" style="left:1073.74px;top:801.96px;transform:scaleX(0.9869)">+1</span>
<span class="t" style="left:1284.25px;top:801.96px;color:#27365a;transform:scaleX(0.9652)">+1</span>
<span class="t" style="left:908.64px;top:146.86px;font-size:31px;color:#fff">1</span>
<div class="abs" style="left:908px;top:164px;width:8.400px;height:4.500px;background:#ffcc00"></div><div class="abs" style="left:919.300px;top:164px;width:7px;height:4.500px;background:#ffcc00"></div>
</body>
</html>
